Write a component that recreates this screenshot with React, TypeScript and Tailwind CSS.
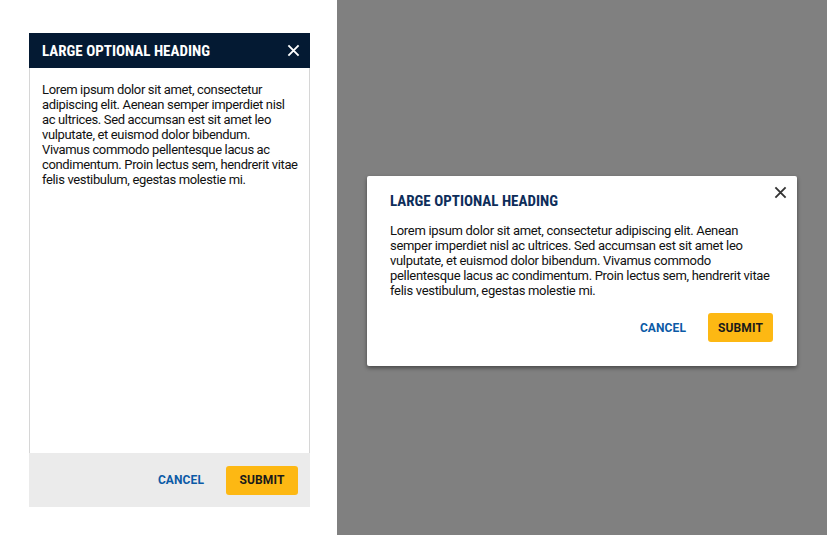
import React from 'react';

const body =
  'Lorem ipsum dolor sit amet, consectetur adipiscing elit. Aenean semper imperdiet nisl ac ultrices. Sed accumsan est sit amet leo vulputate, et euismod dolor bibendum. Vivamus commodo pellentesque lacus ac condimentum. Proin lectus sem, hendrerit vitae felis vestibulum, egestas molestie mi.';

const CloseIcon = ({ className }: { className?: string }) => (
  <svg viewBox="0 0 14 14" className={className} fill="none" stroke="currentColor" strokeWidth={2}>
    <path d="M1.5 1.5 L12.5 12.5 M12.5 1.5 L1.5 12.5" />
  </svg>
);

const Buttons = ({ submitW }: { submitW: string }) => (
  <div className="flex items-center justify-end">
    <button className="mr-[22px] text-[12px] font-bold text-[#0b5aa6] tracking-[0.1px]">CANCEL</button>
    <button
      className={`h-[29px] rounded-[3px] bg-[#fdb813] text-[12px] font-bold text-[#1a1a1a] tracking-[0.1px] ${submitW}`}
    >
      SUBMIT
    </button>
  </div>
);

export default function App() {
  return (
    <div className="flex h-[535px] w-[827px] overflow-hidden font-['Roboto',sans-serif]">
      {/* mobile / full-height variant */}
      <div className="w-[337px] bg-white pl-[29px] pt-[33px]">
        <div className="flex h-[474px] w-[281px] flex-col">
          <div className="flex h-[35px] items-center justify-between bg-[#041a33] pl-[13px] pr-[10px] text-white">
            <h2 className="font-['Roboto_Condensed','Roboto',sans-serif] text-[15px] font-bold leading-[18px]">
              LARGE OPTIONAL HEADING
            </h2>
            <CloseIcon className="h-[13px] w-[13px]" />
          </div>
          <div className="flex-1 border-x border-[#d6d6d6] pl-[12px] pr-[9px] pt-[14px]">
            <p className="text-[13px] leading-[15px] tracking-[-0.35px] text-[#111]">{body}</p>
          </div>
          <div className="flex h-[54px] items-center justify-end bg-[#ebebeb] pr-[12px]">
            <Buttons submitW="w-[72px]" />
          </div>
        </div>
      </div>

      {/* desktop dialog over overlay */}
      <div className="flex-1 bg-[#808080] pl-[30px] pt-[176px]">
        <div className="relative h-[190px] w-[430px] rounded-[2px] bg-white pl-[23px] pr-[24px] pt-[16px] shadow-[0_2px_4px_rgba(0,0,0,0.45)]">
          <CloseIcon className="absolute right-[10px] top-[10px] h-[13px] w-[13px] text-[#333]" />
          <h2 className="font-['Roboto_Condensed','Roboto',sans-serif] text-[15px] font-bold leading-[18px] text-[#0d2d5a]">
            LARGE OPTIONAL HEADING
          </h2>
          <p className="mt-[13px] text-[13px] leading-[15px] tracking-[-0.3px] text-[#111]">{body}</p>
          <div className="mt-[15px]">
            <Buttons submitW="w-[65px]" />
          </div>
        </div>
      </div>
    </div>
  );
}
